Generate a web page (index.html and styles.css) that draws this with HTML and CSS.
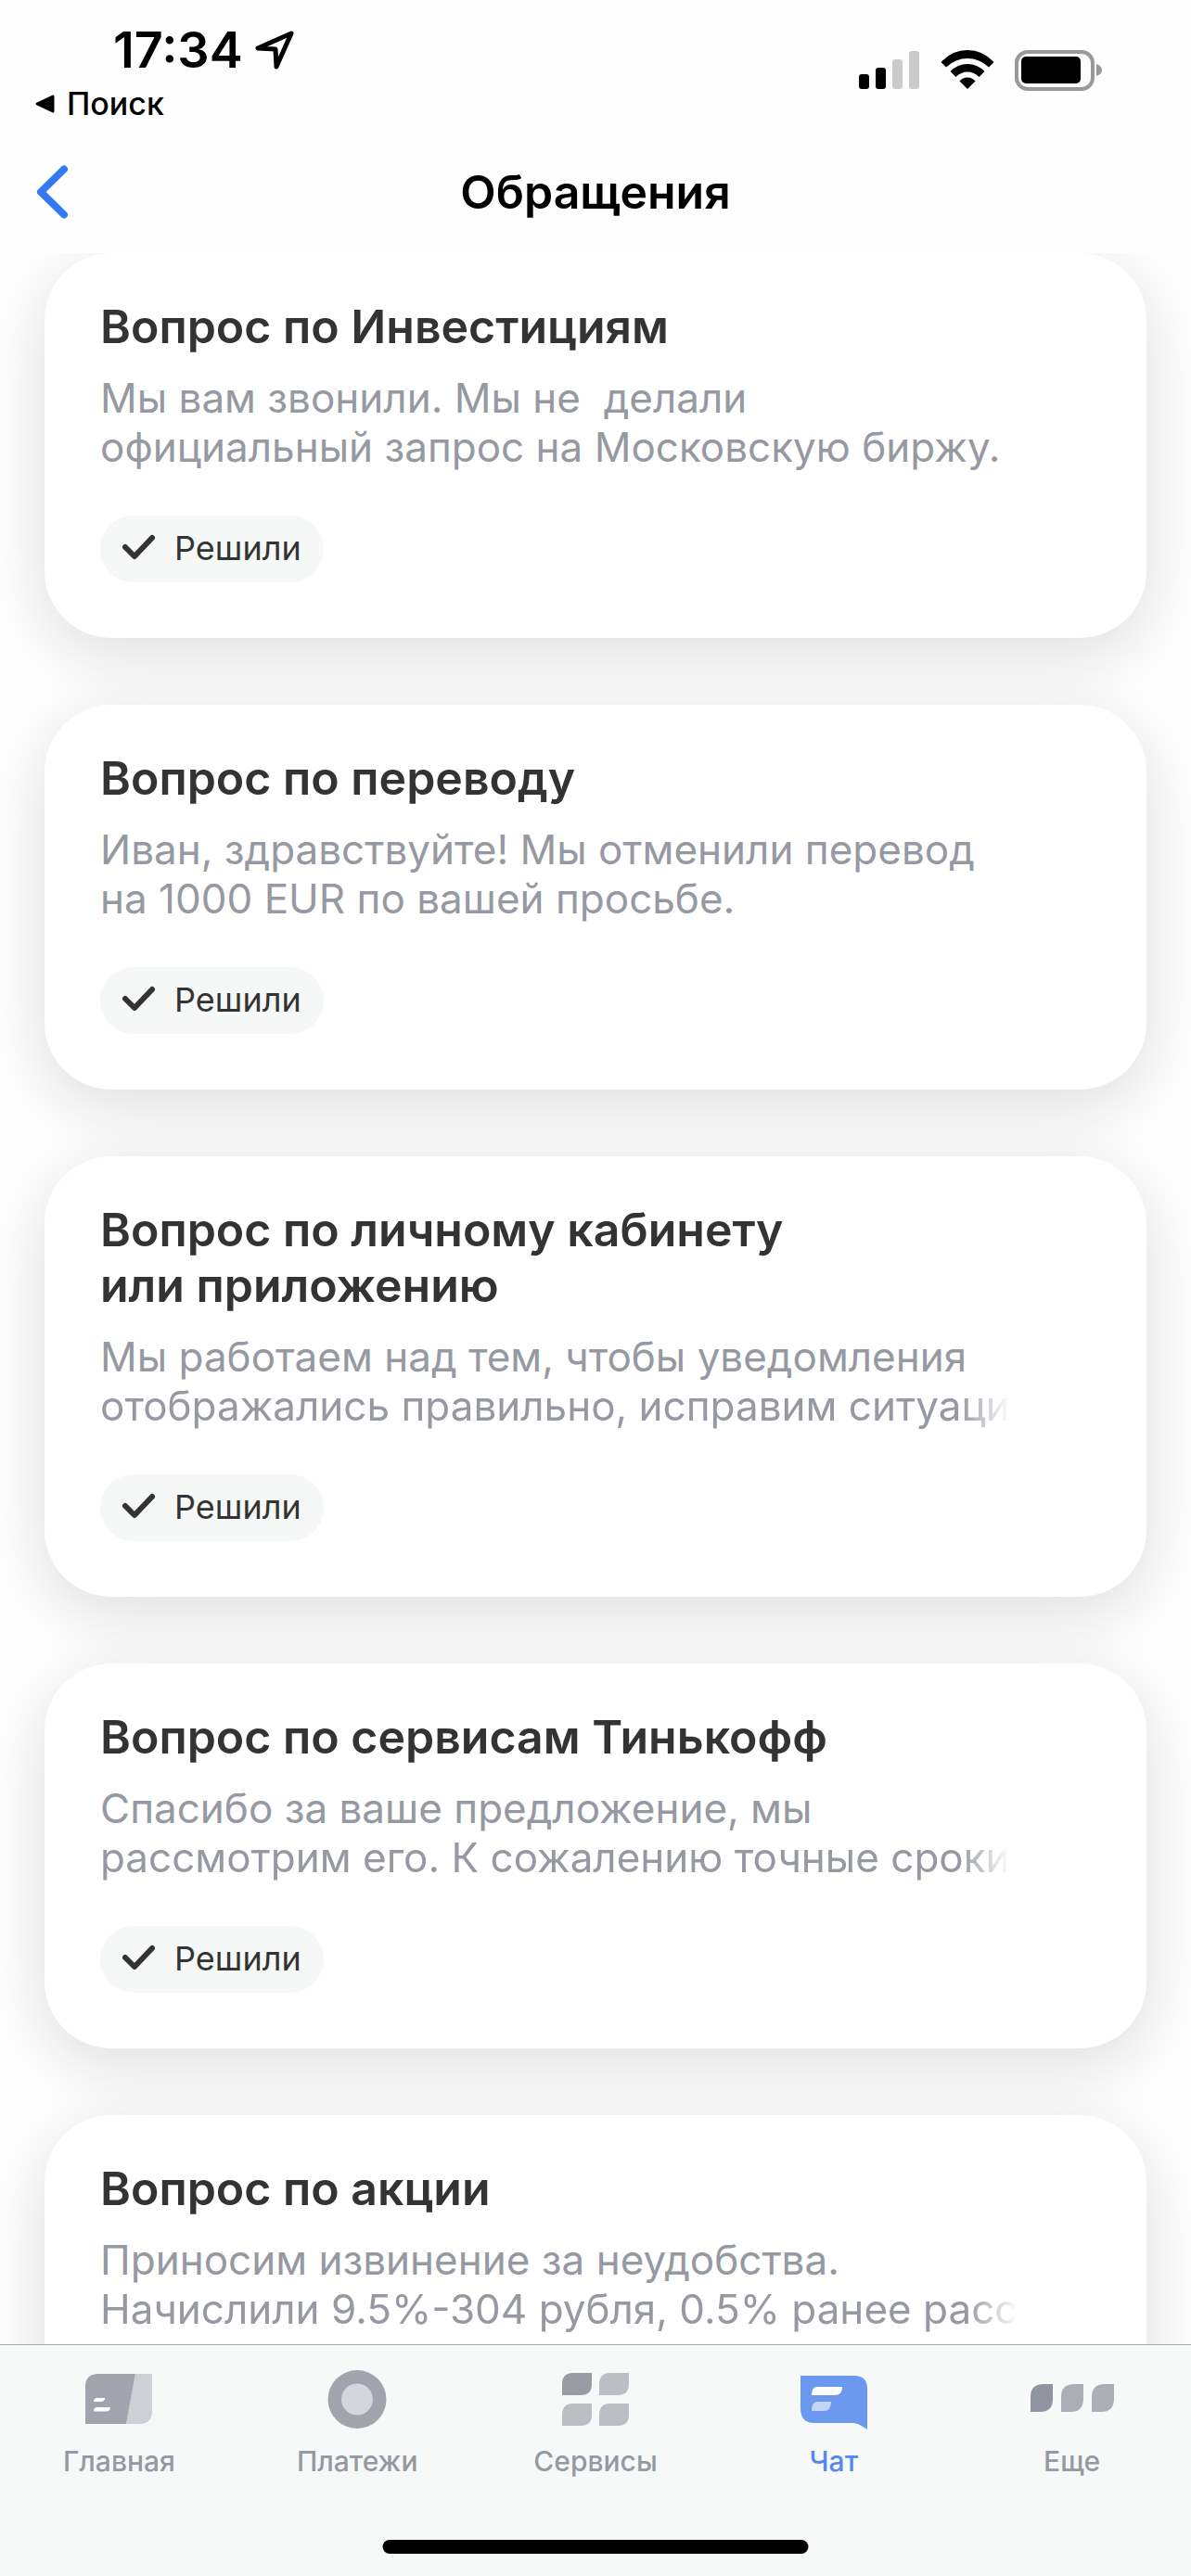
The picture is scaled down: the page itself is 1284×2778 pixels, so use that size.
FILE: index.html
```html
<!DOCTYPE html>
<html lang="ru">

<head>
  <meta charset="UTF-8">
  <meta name="viewport" content="width=device-width, initial-scale=1.0">
  <title>Обращения</title>
  <link rel="stylesheet" href="styles.css">
</head>

<body>
  <!-- Status bar -->
  <div class="status-bar">
    <div class="status-left">
      <div class="time">
        <span>17:34</span>
        <svg class="location" width="44" height="44" viewBox="0 0 44 44">
          <path d="M40 4 L4 20 L23 21 L24 40 Z" fill="none" stroke="#000" stroke-width="5" stroke-linejoin="round"/>
        </svg>
      </div>
      <a href="#" class="return-link">
        <svg width="22" height="22" viewBox="0 0 22 22">
          <path d="M2 11 L19 3 V19 Z" fill="#000" stroke="#000" stroke-width="3" stroke-linejoin="round"/>
        </svg>
        Поиск
      </a>
    </div>
    <div class="status-right">
      <svg width="66" height="44" viewBox="0 0 66 44">
        <rect x="0" y="26" width="11" height="16" rx="3"/>
        <rect x="18" y="19" width="11" height="23" rx="3"/>
        <rect x="36" y="10" width="11" height="32" rx="3" fill="#cbcbcb"/>
        <rect x="54" y="1" width="11" height="41" rx="3" fill="#cbcbcb"/>
      </svg>
      <svg width="58" height="44" viewBox="0 0 58 44">
        <path d="M0.500 13 Q12.500 0 29 0 Q45.500 0 57.500 13 L52 18.500 Q42 9 29 9 Q16 9 6 18.500 Z"/>
        <path d="M10.500 23 Q18.500 15 29 15 Q39.500 15 47.500 23 L41.500 29 Q36 23.500 29 23.500 Q22 23.500 16.500 29 Z"/>
        <path d="M20.500 33.500 Q24 29.500 29 29.500 Q34 29.500 37.500 33.500 L29 42 Z"/>
      </svg>
      <svg width="96" height="44" viewBox="0 0 96 44">
        <rect x="2" y="2" width="82" height="40" rx="12" fill="none" stroke="#999" stroke-width="4"/>
        <rect x="7" y="7" width="64" height="29" rx="5"/>
        <path d="M88 15 Q94 17 94 21.500 Q94 26 88 28 Z" fill="#999"/>
      </svg>
    </div>
  </div>

  <!-- Header -->
  <header>
    <button class="back" aria-label="Назад">
      <svg width="34" height="58" viewBox="0 0 34 58">
        <path d="M29 4.500 L4 29 L29 53.500" fill="none" stroke="#3478f6" stroke-width="8" stroke-linecap="round" stroke-linejoin="round"/>
      </svg>
    </button>
    <h1>Обращения</h1>
  </header>

  <!-- Requests -->
  <main>
    <a href="#" class="card">
      <h2>Вопрос по Инвестициям</h2>
      <p><span>Мы вам звонили. Мы не  делали</span><span>официальный запрос на Московскую биржу.</span></p>
      <div class="badge">
        <svg width="36" height="36" viewBox="0 0 36 36"><path d="M3 17 L13 27 L32 7"/></svg>
        Решили
      </div>
    </a>

    <a href="#" class="card">
      <h2>Вопрос по переводу</h2>
      <p><span>Иван, здравствуйте! Мы отменили перевод</span><span>на 1000 EUR по вашей просьбе.</span></p>
      <div class="badge">
        <svg width="36" height="36" viewBox="0 0 36 36"><path d="M3 17 L13 27 L32 7"/></svg>
        Решили
      </div>
    </a>

    <a href="#" class="card">
      <h2>Вопрос по личному кабинету<br>или приложению</h2>
      <p><span>Мы работаем над тем, чтобы уведомления</span><span class="fade">отображались правильно, исправим ситуаци</span></p>
      <div class="badge">
        <svg width="36" height="36" viewBox="0 0 36 36"><path d="M3 17 L13 27 L32 7"/></svg>
        Решили
      </div>
    </a>

    <a href="#" class="card">
      <h2>Вопрос по сервисам Тинькофф</h2>
      <p><span>Спасибо за ваше предложение, мы</span><span class="fade">рассмотрим его. К сожалению точные сроки</span></p>
      <div class="badge">
        <svg width="36" height="36" viewBox="0 0 36 36"><path d="M3 17 L13 27 L32 7"/></svg>
        Решили
      </div>
    </a>

    <a href="#" class="card">
      <h2>Вопрос по акции</h2>
      <p><span>Приносим извинение за неудобства.</span><span class="fade">Начислили 9.5%-304 рубля, 0.5% ранее расс</span></p>
    </a>
  </main>

  <!-- Tabs -->
  <nav class="tab-bar">
    <div class="tabs">
      <a href="#" class="tab">
        <svg width="96" height="64" viewBox="0 0 96 64">
          <path d="M66 4 H84 V44 Q84 58 70 58 H56 Z" fill="#cdd0d4"/>
          <path d="M26 4 H66 L56 58 H12 V18 Q12 4 26 4 Z" fill="#a1a4ad"/>
          <path d="M25 30 H33 Q33 34 29 34 H21 Q21 30 25 30 Z M25 40 H39 Q39 44.500 34 44.500 H21 Q21 40 25 40 Z" fill="#fff"/>
        </svg>
        Главная
      </a>
      <a href="#" class="tab">
        <svg width="96" height="64" viewBox="0 0 96 64">
          <circle cx="48" cy="31.500" r="31.500" fill="#a1a4ad"/>
          <circle cx="48" cy="31.500" r="17" fill="#d3d6da"/>
        </svg>
        Платежи
      </a>
      <a href="#" class="tab">
        <svg width="96" height="64" viewBox="0 0 96 64">
          <path d="M24 3 H44 V15 Q44 27 32 27 H12 V15 Q12 3 24 3 Z" fill="#999ba5"/>
          <path d="M64 3 H84 V15 Q84 27 72 27 H52 V15 Q52 3 64 3 Z" fill="#bbbec3"/>
          <path d="M24 36 H44 V48 Q44 60 32 60 H12 V48 Q12 36 24 36 Z" fill="#bbbec3"/>
          <path d="M64 36 H84 V48 Q84 60 72 60 H52 V48 Q52 36 64 36 Z" fill="#bbbec3"/>
        </svg>
        Сервисы
      </a>
      <a href="#" class="tab active">
        <svg width="96" height="64" viewBox="0 0 96 64">
          <path d="M12 6 H70 Q84 6 84 20 V64 Q74 57 69 57 H27 Q12 57 12 41 Z" fill="#6b99f0"/>
          <path d="M30 18 H57 Q57 27 49 27 H24 Q24 18 30 18 Z" fill="#fff"/>
          <path d="M30 34 H45 Q45 44 37 44 H24 Q24 34 30 34 Z" fill="#c4d5f8"/>
        </svg>
        Чат
      </a>
      <a href="#" class="tab">
        <svg width="96" height="64" viewBox="0 0 96 64">
          <path d="M17 15 H27 V31 Q27 45 13 45 H3 V29 Q3 15 17 15 Z" fill="#9093a0"/>
          <path d="M50 15 H60 V31 Q60 45 46 45 H36 V29 Q36 15 50 15 Z" fill="#abaeb5"/>
          <path d="M83 15 H93 V31 Q93 45 79 45 H69 V29 Q69 15 83 15 Z" fill="#abaeb5"/>
        </svg>
        Еще
      </a>
    </div>
    <div class="home-indicator"></div>
  </nav>
</body>

</html>
```
FILE: styles.css
```css
* {
  margin: 0;
  padding: 0;
  box-sizing: border-box;
}

body {
  height: 100vh;
  display: flex;
  flex-direction: column;
  overflow: hidden;
  background: #fefefe;
  color: #333;
  font-family: Inter, "Liberation Sans", sans-serif;
}

a {
  color: inherit;
  text-decoration: none;
}

svg {
  display: block;
  flex-shrink: 0;
}

/* Status bar */
.status-bar {
  display: flex;
  justify-content: space-between;
  padding: 24px 94px 0 38px;
  height: 144px;
  color: #000;
}

.time {
  display: flex;
  align-items: center;
  gap: 12px;
  padding-left: 84px;
  font-size: 54px;
  font-weight: 600;
  line-height: 60px;
}

.return-link {
  display: flex;
  align-items: center;
  gap: 12px;
  font-size: 34px;
  font-weight: 500;
  line-height: 56px;
}

.status-right {
  display: flex;
  gap: 22px;
  padding-top: 30px;
}

/* Header */
header {
  display: grid;
  grid-template-columns: 1fr auto 1fr;
  align-items: center;
  height: 129px;
  padding: 0 40px 4px;
}

.back {
  justify-self: start;
  border: none;
  background: none;
  cursor: pointer;
}

h1 {
  font-size: 50px;
  font-weight: 600;
  line-height: 60px;
  color: #000;
}

/* Cards */
main {
  flex: 1;
  min-height: 0;
  overflow: hidden;
  padding: 0 48px;
}

.card {
  display: block;
  margin-bottom: 72px;
  padding: 49px 140px 60px 60px;
  border-radius: 72px;
  background: #fff;
  box-shadow: 0 18px 72px rgba(0, 0, 0, 0.13);
}

h2 {
  margin-bottom: 21px;
  font-size: 50px;
  font-weight: 600;
  line-height: 60px;
  white-space: nowrap;
}

.card p {
  margin-bottom: 47px;
  font-size: 44px;
  line-height: 53px;
  color: #9699a2;
}

.card p span {
  display: block;
  white-space: pre;
}

.card p .fade {
  width: fit-content;
  -webkit-mask-image: linear-gradient(to left, transparent, #000 54px);
  mask-image: linear-gradient(to left, transparent, #000 54px);
}

.badge {
  display: inline-flex;
  align-items: center;
  gap: 20px;
  height: 72px;
  padding: 0 24px 2px;
  border-radius: 36px;
  background: #f6f8f8;
  font-size: 36px;
  vertical-align: top;
}

.badge path {
  fill: none;
  stroke: #333;
  stroke-width: 6;
  stroke-linecap: round;
  stroke-linejoin: round;
}

/* Tab bar */
.tab-bar {
  position: relative;
  height: 250px;
  padding-top: 27px;
  border-top: 1px solid #adadb0;
  background: #f7f8f8;
}

.tabs {
  display: flex;
}

.tab {
  flex: 1;
  display: flex;
  flex-direction: column;
  align-items: center;
  gap: 16px;
  font-size: 30px;
  font-weight: 500;
  line-height: 36px;
  color: #9699a2;
}

.tab.active {
  color: #5488ee;
}

.home-indicator {
  position: absolute;
  bottom: 24px;
  left: 50%;
  width: 459px;
  height: 15px;
  border-radius: 8px;
  background: #000;
  transform: translateX(-50%);
}
```
